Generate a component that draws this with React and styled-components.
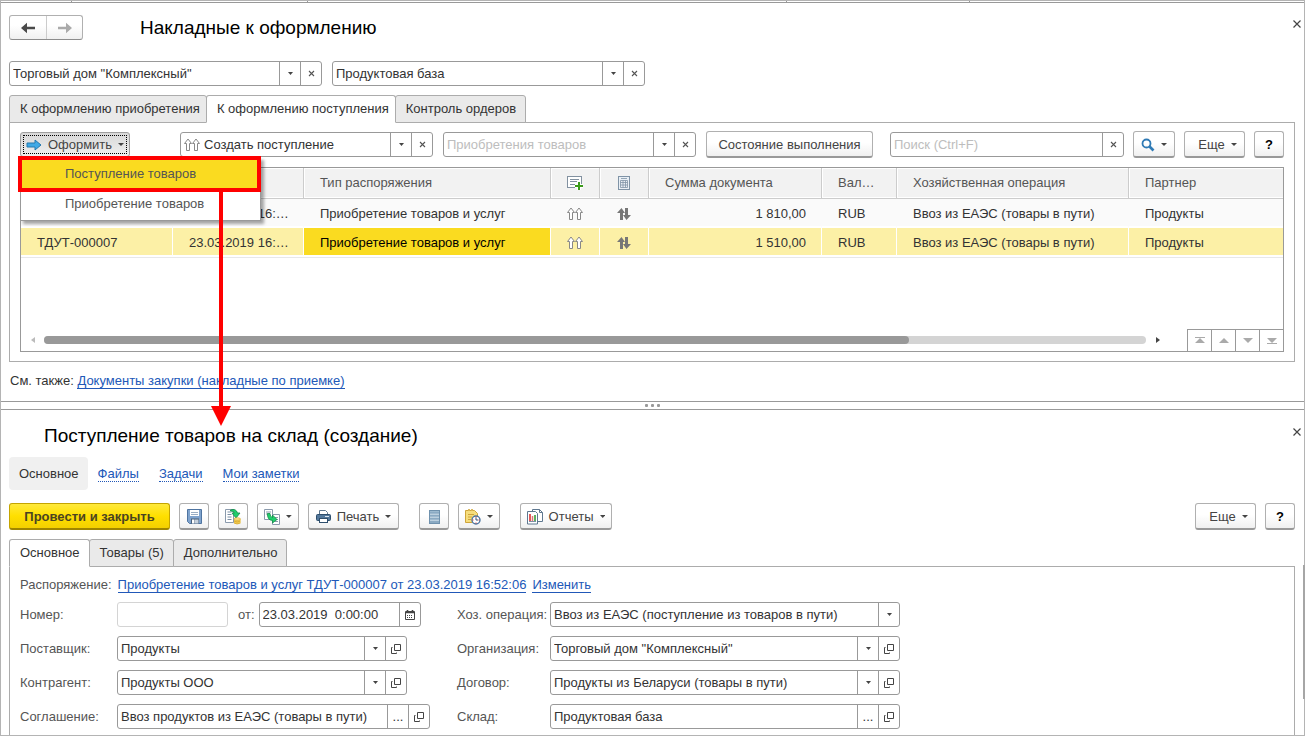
import React from 'react';
import styled, { createGlobalStyle, css } from 'styled-components';

const GlobalStyle = createGlobalStyle`
  *, *::before, *::after { box-sizing: border-box; }
  body { margin: 0; background: #fff; }
  body, button, input, select, table {
    font-family: "Liberation Sans", Arial, sans-serif;
    font-size: 13px;
    line-height: 16px;
    color: #333;
  }
  button, input, select { margin: 0; }
`;

const Frame = styled.div`
  position: relative;
  display: flex;
  flex-direction: column;
  min-height: 100vh;
  border: 1px solid #b4b4b4;
`;
const TopStrip = styled.div`
  display: flex;
  height: 2px;
  border-bottom: 1px solid #999;
`;
const StripSegment = styled.span`
  width: ${(p) => p.$w}px;
  border-right: 1px solid #999;
`;
const ListPane = styled.section`
  padding: 12px 9px 12px 8px;
`;
const FormPane = styled.section`
  display: flex;
  flex-direction: column;
  flex: 1;
  padding: 13px 9px 0 8px;
`;
const Header = styled.header`
  display: flex;
  align-items: center;
  height: 25px;
  gap: 57px;
`;
const Title = styled.h1`
  margin: 0;
  padding-left: ${(p) => p.$indent || 0}px;
  flex: 1;
  font-size: 19px;
  line-height: 24px;
  font-weight: 400;
  color: #000;
`;
const Close = styled.button`
  display: flex;
  width: 14px;
  height: 14px;
  padding: 2px;
  margin: 0 -9px 8px 0;
  border: 0;
  background: none;
`;
const NavGroup = styled.div`
  display: flex;
  height: 25px;
  border: 1px solid #b0b0b0;
  border-bottom-color: #8c8c8c;
  border-radius: 3px;
  background: linear-gradient(#fff 40%, #f0f0f0);
`;
const NavButton = styled.button`
  display: flex;
  align-items: center;
  justify-content: center;
  width: 36px;
  padding: 0;
  border: 0;
  background: none;
  & + & { border-left: 1px solid #ccc; }
`;
const Row = styled.div`
  display: flex;
  align-items: center;
  gap: ${(p) => p.$gap || 10}px;
  margin-top: ${(p) => p.$top || 0}px;
`;
const EndGroup = styled(Row)`
  margin-left: auto;
`;
const Spacer = styled.div`
  flex: 0 0 2px;
`;

const FieldBox = styled.div`
  display: flex;
  flex: none;
  width: ${(p) => p.$w}px;
  height: 25px;
  border: 1px solid ${(p) => (p.$faint ? '#d4d4d4' : '#999')};
  border-radius: 3px;
  background: #fff;
  overflow: hidden;
`;
const control = css`
  flex: 1;
  min-width: 0;
  height: 23px;
  padding: 0 3px;
  border: 0;
  outline: 0;
  background: none;
  appearance: none;
  text-overflow: ellipsis;
  color: ${(p) => (p.$muted ? '#bdbdbd' : '#333')};
`;
const Input = styled.input`
  ${control}
  &::placeholder { color: #bdbdbd; }
`;
const SelectGrid = styled.div`
  flex: 1;
  min-width: 0;
  display: grid;
  grid-template-columns: minmax(0, 1fr) 21px;
`;
const Select = styled.select`
  ${control}
  grid-area: 1 / 1 / 2 / 3;
  padding-right: 25px;
`;
const CaretCell = styled.span`
  grid-area: 1 / 2;
  display: flex;
  align-items: center;
  justify-content: center;
  border-left: 1px solid #999;
  pointer-events: none;
`;
const CellButton = styled.button`
  display: flex;
  align-items: center;
  justify-content: center;
  flex: 0 0 21px;
  padding: 0;
  border: 0;
  border-left: 1px solid #999;
  background: none;
`;
const FieldIcon = styled.span`
  display: flex;
  align-items: center;
  padding-left: 3px;
  margin-right: 1px;
`;

const TabBar = styled.div`
  display: flex;
  height: 28px;
  margin-top: 9px;
  margin-bottom: -1px;
`;
const Tab = styled.button`
  padding: 0 ${(p) => (p.$roomy ? 9 : 6)}px 0 10px;
  margin-left: -1px;
  border: 1px solid #acacac;
  border-bottom-color: ${(p) => (p.$active ? '#fff' : '#acacac')};
  border-radius: 3px 3px 0 0;
  background: ${(p) => (p.$active ? '#fff' : '#eaeaea')};
  position: relative;
  z-index: ${(p) => (p.$active ? 1 : 0)};
  &:first-child { margin-left: 0; }
`;
const TabPanel = styled.div`
  border: 1px solid #acacac;
  padding: 8px 10px 9px;
`;
const FormPanel = styled(TabPanel)`
  flex: 1;
  border-bottom: 0;
  padding: 10px 10px 6px;
`;

const Button = styled.button`
  display: flex;
  align-items: center;
  justify-content: center;
  flex: none;
  gap: 6px;
  height: 27px;
  width: ${(p) => (p.$w ? `${p.$w}px` : 'auto')};
  padding: 1px 6px 0;
  border: 1px solid #b0b0b0;
  border-bottom: 2px solid #999;
  border-radius: 3px;
  background: linear-gradient(#fff 45%, #f0f0f0);
  color: #444;
`;
const ButtonText = styled.span`
  margin-left: ${(p) => p.$l || 0}px;
`;
const PressedButton = styled(Button)`
  height: 25px;
  padding: 0 3px;
  border: 1px solid #a0a0a0;
  background: linear-gradient(#d8d8d8, #efefef);
  outline: 1px dotted #000;
  outline-offset: -4px;
`;
const PrimaryButton = styled(Button)`
  border-color: #c4a400;
  border-bottom-color: #a08600;
  background: linear-gradient(#ffe93b, #ffdf00 50%, #f3d000);
  font-weight: 700;
  color: #4a4322;
`;
const HelpButton = styled(Button)`
  color: #000;
  font-weight: 700;
`;

const MenuAnchor = styled.div`
  position: relative;
  margin-right: 40px;
`;
const Menu = styled.div`
  position: absolute;
  z-index: 3;
  top: 25px;
  left: 0;
  width: 241px;
  padding: 1px 0;
  border: 1px solid #999;
  background: #fff;
  box-shadow: 3px 3px 3px rgba(0, 0, 0, 0.35);
`;
const MenuItem = styled.button`
  display: block;
  width: 100%;
  height: 30px;
  padding: 0 0 0 44px;
  border: 0;
  text-align: left;
  color: #555;
  background: ${(p) => (p.$active ? '#fadb20' : '#fff')};
  ${(p) => p.$active && css`
    position: relative;
    width: calc(100% - 2px);
    outline: 4px solid #f00;
    outline-offset: -1px;
  `}
`;

const TableBox = styled.div`
  display: flex;
  flex-direction: column;
  height: 185px;
  margin-top: 9px;
  border: 1px solid #999;
`;
const Table = styled.table`
  width: 100%;
  table-layout: fixed;
  border-collapse: separate;
  border-spacing: 0;
`;
const Th = styled.th`
  height: 31px;
  padding: 0 16px;
  border-right: 1px solid #ccc;
  border-bottom: 1px solid #ccc;
  background: #f2f2f2;
  box-shadow: inset 1px 1px #fff, inset 0 -1px #fff;
  font-weight: 400;
  text-align: left;
  color: #555;
  white-space: nowrap;
  overflow: hidden;
  text-overflow: ellipsis;
  &:last-child { border-right: 0; }
`;
const Td = styled.td`
  height: 29px;
  padding: 2px ${(p) => (p.$align ? 15 : 12)}px 0 16px;
  border-right: 1px solid ${(p) => (p.$selected ? '#fff' : '#fafafa')};
  border-bottom: 2px solid #fff;
  box-shadow: 0 1px #e8e8e8;
  background: ${(p) => (p.$current ? '#fadb20' : p.$selected ? '#fcf0a6' : '#fafafa')};
  background-clip: padding-box;
  text-align: ${(p) => p.$align || 'left'};
  color: ${(p) => (p.$current ? '#000' : '#333')};
  white-space: nowrap;
  overflow: hidden;
  text-overflow: ellipsis;
  &:last-child { border-right: 0; }
`;
const IconWrap = styled.span`
  display: flex;
  justify-content: center;
  margin: 0 -12px 0 -16px;
`;
const HeadIconWrap = styled(IconWrap)`
  margin-right: -16px;
`;
const TableFooter = styled.div`
  display: flex;
  align-items: center;
  height: 22px;
  margin-top: auto;
  padding-left: 9px;
`;
const Track = styled.div`
  flex: 1;
  height: 8px;
  margin: 0 9px 0 8px;
  border-radius: 4px;
  background: #d4d4d4;
`;
const Thumb = styled.div`
  width: 78.5%;
  height: 8px;
  border-radius: 4px;
  background: #999;
`;
const Pager = styled.div`
  display: flex;
  height: 22px;
  margin-left: 26px;
  border-top: 1px solid #999;
`;
const PagerButton = styled.button`
  display: flex;
  align-items: center;
  justify-content: center;
  width: 24px;
  padding: 0;
  border: 0;
  border-left: 1px solid #999;
  background: none;
`;

const SeeAlso = styled.p`
  margin: 11px 0 0;
  padding-left: 1px;
`;
const Link = styled.a`
  color: #2158b8;
  text-decoration: none;
  border-bottom: 1px ${(p) => (p.$dotted ? 'dotted' : 'solid')} #2158b8;
  line-height: 15px;
`;
const Splitter = styled.div`
  display: flex;
  align-items: center;
  justify-content: center;
  gap: 3px;
  height: 9px;
  border: solid #999;
  border-width: 1px 0;
`;
const Dot = styled.i`
  width: 3px;
  height: 3px;
  border-radius: 1px;
  background: #999;
`;

const SectionNav = styled.nav`
  display: flex;
  align-items: baseline;
  gap: 20px;
  height: 33px;
  margin-top: 9px;
`;
const CurrentSection = styled.span`
  padding: 9px 9px 8px 10px;
  margin-right: -10px;
  border-radius: 4px;
  background: #f0f0f0;
`;
const FormGrid = styled.div`
  display: grid;
  grid-template-columns: 97px 340px 93px 350px;
  row-gap: 9px;
  align-items: center;
  margin-top: 9px;
`;
const Label = styled.label`
  color: #555;
  white-space: nowrap;
`;
const Basis = styled.div`
  display: flex;
  gap: 6px;
  height: 16px;
  color: #555;
`;
const Callout = styled.svg`
  position: absolute;
  z-index: 4;
  left: 209px;
  top: 187px;
  pointer-events: none;
`;
const PaneScroll = styled.div`
  position: absolute;
  right: -1px;
  bottom: 36px;
  width: 2px;
  height: 134px;
  background: #a6a6a6;
`;

const Caret = ({ w = 5 }) => (
  <svg width={w} height="3" viewBox="0 0 5 3" preserveAspectRatio="none"><path d="M0 0h5L2.5 3z" fill="#444" /></svg>
);
const Cross = () => (
  <svg width="7" height="7"><path d="M1 1l5 5M6 1l-5 5" stroke="#555" strokeWidth="1.1" /></svg>
);
const CloseIcon = () => (
  <svg width="10" height="10"><path d="M1.5 1.5l7 7M8.5 1.5l-7 7" stroke="#444" strokeWidth="1.2" /></svg>
);
const OpenIcon = () => (
  <svg width="10" height="10" fill="none" stroke="#444">
    <path d="M3.500.5h6v6h-6zM1.500 3.500h-1v6h5v-1" />
  </svg>
);
const ArrowIcon = ({ flip, color }) => (
  <svg width="16" height="12" viewBox="0 0 16 12">
    <path d="M1 6L7 .8V4.800H15V7.200H7V11.200z" fill={color} transform={flip ? 'rotate(180 8 6)' : undefined} />
  </svg>
);
const BlueArrow = () => (
  <svg width="16" height="12"><path d="M1 4h8V1l6 5-6 5V8H1z" fill="#3fa9e6" stroke="#2478ae" /></svg>
);
const TwinArrows = ({ color = '#888' }) => (
  <svg width="16" height="13" fill="#fff" stroke={color}>
    <path d="M2.500 12.500v-7h-2L4 1l3.500 4.500h-2v7zM10.500 12.500v-7h-2L12 1l3.500 4.500h-2v7z" />
  </svg>
);
const UpDown = () => (
  <svg width="14" height="12" fill="#777">
    <path d="M3 12V5H0L4.500 0 8 5H6v7zM8 0h3v7h3l-4.500 5L6 7h2z" />
  </svg>
);
const DocPlus = () => (
  <svg width="17" height="14" fill="none">
    <rect x=".5" y=".5" width="14" height="11" fill="#fff" stroke="#8291a0" />
    <path d="M3 3.500h9M3 5.500h7M3 8.500h5" stroke="#8291a0" />
    <path d="M12 6v8M8 10h8" stroke="#fff" strokeWidth="4" />
    <path d="M12 6v8M8 10h8" stroke="#3a9b1a" strokeWidth="2" />
  </svg>
);
const SheetIcon = () => (
  <svg width="12" height="14" fill="none" stroke="#7f93a6">
    <rect x=".5" y=".5" width="11" height="13" fill="#e9eff5" />
    <path d="M3 2.500h6M2.500 4.500h7v7h-7zM2.500 6.500h7M2.500 9h7M5 4.500v7M7.500 4.500v7" strokeWidth=".8" />
  </svg>
);
const SearchIcon = () => (
  <svg width="14" height="14" fill="none" stroke="#2f7ab5">
    <circle cx="5.500" cy="5.500" r="4" strokeWidth="1.800" />
    <path d="M8.500 8.500l4 4" strokeWidth="2.600" />
  </svg>
);
const SaveIcon = () => (
  <svg width="15" height="15">
    <path d="M.5.5h14v14H2.500l-2-2z" fill="#7fa3cd" stroke="#4f74a0" />
    <rect x="3" y="1" width="9" height="6" fill="#fff" />
    <path d="M4 3.500h7M4 5.500h7" stroke="#9aaec4" />
    <rect x="4" y="9.500" width="8" height="5" fill="#4a6079" />
    <rect x="5" y="10.500" width="2.500" height="4" fill="#fff" />
    <rect x="8" y="10.500" width="3.500" height="4" fill="#c5d0dc" />
  </svg>
);
const PostIcon = () => (
  <svg width="17" height="17" fill="none">
    <path d="M.5 1.500h8v13h-8z" fill="#fff" stroke="#8a9aac" />
    <path d="M2.500 4h4M2.500 6.500h4M2.500 9h4M2.500 11.500h4" stroke="#7b8ea4" />
    <path d="M5.500 2Q11 0 12.500 5H15L11 10 7 5h2.500Q9 3 5.500 3z" fill="#1fcf6b" stroke="#128a47" strokeWidth=".8" />
    <path d="M9 11v4q3 2 6.500 0v-4z" fill="#f3cc50" />
    <ellipse cx="12.200" cy="11" rx="3.300" ry="1.300" fill="#fbe48c" stroke="#d3a42c" strokeWidth=".6" />
    <path d="M9 13q3 2 6.500 0M9 15q3 2 6.500 0" stroke="#d3a42c" strokeWidth=".8" />
  </svg>
);
const CreateFromIcon = () => (
  <svg width="17" height="16" fill="none">
    <path d="M.5.5h8v10h-8zM8.500 5.500h7v10h-7z" fill="#fff" stroke="#8a9aac" />
    <path d="M2 3h5M2 5h2M11 8.500h3M11 10.500h3M11 12.500h3" stroke="#8a9aac" />
    <path d="M3.500 4.500h2.500Q6 8 8.500 8.500V6L13 10.500 8.500 14v-2.500Q3 11 3.500 4.500z" fill="#1fcf6b" stroke="#128a47" strokeWidth=".8" />
  </svg>
);
const PrinterIcon = () => (
  <svg width="15" height="15">
    <path d="M3.500 6V1.500h6l2 2V6" fill="#fff" stroke="#5f7890" />
    <rect x=".5" y="5.500" width="14" height="6" rx="1" fill="#52779b" stroke="#2e4e6c" />
    <path d="M9 7.500h4" stroke="#dce6ef" />
    <rect x="3.500" y="9.500" width="8" height="4" fill="#fff" stroke="#2e4e6c" />
  </svg>
);
const ListIcon = () => (
  <svg width="11" height="14">
    <rect x=".5" y=".5" width="10" height="13" fill="#9cb9cf" stroke="#6f91ad" />
    <path d="M1 4h9M1 7h9M1 10h9" stroke="#dbe7f0" />
    <path d="M1 3h9M1 6h9M1 9h9M1 12h9" stroke="#6f91ad" strokeWidth=".7" />
  </svg>
);
const TaskIcon = () => (
  <svg width="16" height="16" fill="none">
    <path d="M.5 1.500h3v-1h1v1h2v-1h1v1h2l3 3v9h-12z" fill="#f6dd7c" stroke="#cfa53a" />
    <path d="M3 5.500h6M3 8h4M3 10.500h3" stroke="#cfa53a" />
    <circle cx="11" cy="11" r="4" fill="#fff" stroke="#4a76a2" strokeWidth="1.400" />
    <path d="M11 11V8.500M11 11h2" stroke="#35577a" />
    <path d="M11 7.500v1M11 13.500v1M7.500 11h1M13.500 11h1" stroke="#d33" />
  </svg>
);
const ReportIcon = () => (
  <svg width="17" height="16" fill="none">
    <path d="M5.500.5h7l3 3v9h-10z" fill="#fff" stroke="#5f7890" />
    <path d="M12.500.5v3h3" stroke="#5f7890" />
    <path d="M.5 2.500h8l2 2v10.500H.5z" fill="#fff" stroke="#5f7890" />
    <path d="M3 5v7" stroke="#d22" strokeWidth="1.500" />
    <path d="M5.500 7v5" stroke="#d77" strokeWidth="1.500" />
    <path d="M8 6v6" stroke="#2a9a2a" strokeWidth="1.500" />
    <path d="M2 12.500h7" stroke="#7b8ea4" />
  </svg>
);
const CalendarIcon = () => (
  <svg width="10" height="10">
    <path d="M.5 1.500h9v8h-9z" fill="#fff" stroke="#444" />
    <path d="M1 2.500h8M2.500 0v3M7.500 0v3" stroke="#444" strokeWidth="1.600" />
    <path d="M2 5.500h6M2 7.500h6" stroke="#444" strokeDasharray="1 1" />
  </svg>
);

const SelectField = ({ w, value, muted, clear, open, icon, id, name }) => (
  <FieldBox $w={w}>
    {icon && <FieldIcon>{icon}</FieldIcon>}
    <SelectGrid>
      <Select id={id} aria-label={name} $muted={muted} defaultValue={value}>
        <option>{value}</option>
      </Select>
      <CaretCell><Caret /></CaretCell>
    </SelectGrid>
    {clear && <CellButton aria-label="Очистить"><Cross /></CellButton>}
    {open && <CellButton aria-label="Открыть"><OpenIcon /></CellButton>}
  </FieldBox>
);
const PickField = ({ w, value, id }) => (
  <FieldBox $w={w}>
    <Input id={id} defaultValue={value} />
    <CellButton aria-label="Выбрать">...</CellButton>
    <CellButton aria-label="Открыть"><OpenIcon /></CellButton>
  </FieldBox>
);

const stripSegments = [71, 236, 479, 183];
const columns = [152, 131, 247, 49, 49, 173, 75, 232];
const orders = [
  { number: 'ТДУТ-000006', date: '23.03.2019 16:52:06', sum: '1 810,00' },
  { number: 'ТДУТ-000007', date: '23.03.2019 16:52:06', sum: '1 510,00', selected: true },
];

const OrdersTable = () => (
  <Table>
    <colgroup>
      {columns.map((w, i) => <col key={i} width={w} />)}
      <col />
    </colgroup>
    <thead>
      <tr>
        <Th>Номер</Th>
        <Th>Дата</Th>
        <Th>Тип распоряжения</Th>
        <Th><HeadIconWrap><DocPlus /></HeadIconWrap></Th>
        <Th><HeadIconWrap><SheetIcon /></HeadIconWrap></Th>
        <Th>Сумма документа</Th>
        <Th>Валюта</Th>
        <Th>Хозяйственная операция</Th>
        <Th>Партнер</Th>
      </tr>
    </thead>
    <tbody>
      {orders.map((o) => (
        <tr key={o.number}>
          <Td $selected={o.selected}>{o.number}</Td>
          <Td $selected={o.selected}>{o.date}</Td>
          <Td $selected={o.selected} $current={o.selected}>Приобретение товаров и услуг</Td>
          <Td $selected={o.selected}><IconWrap><TwinArrows /></IconWrap></Td>
          <Td $selected={o.selected}><IconWrap><UpDown /></IconWrap></Td>
          <Td $selected={o.selected} $align="right">{o.sum}</Td>
          <Td $selected={o.selected}>RUB</Td>
          <Td $selected={o.selected}>Ввоз из ЕАЭС (товары в пути)</Td>
          <Td $selected={o.selected}>Продукты</Td>
        </tr>
      ))}
    </tbody>
  </Table>
);

const pagerShapes = [
  ['В начало', 'M0 0h10v1H0zM0 6h10L5 1z'],
  ['Вверх', 'M0 6h10L5 1z'],
  ['Вниз', 'M0 1h10L5 6z'],
  ['В конец', 'M0 1h10L5 6zM0 6h10v1H0z'],
];

export default function App() {
  return (
    <Frame>
      <GlobalStyle />
      <TopStrip>
        {stripSegments.map((w) => <StripSegment key={w} $w={w} />)}
      </TopStrip>
      <ListPane>
        <Header>
          <NavGroup>
            <NavButton aria-label="Назад"><ArrowIcon color="#4a4a4a" /></NavButton>
            <NavButton aria-label="Вперед"><ArrowIcon flip color="#aaa" /></NavButton>
          </NavGroup>
          <Title>Накладные к оформлению</Title>
          <Close aria-label="Закрыть"><CloseIcon /></Close>
        </Header>
        <Row $top={21}>
          <SelectField w={313} name="Организация" value={'Торговый дом "Комплексный"'} clear />
          <SelectField w={313} name="Склад" value="Продуктовая база" clear />
        </Row>
        <TabBar>
          <Tab>К оформлению приобретения</Tab>
          <Tab $active>К оформлению поступления</Tab>
          <Tab $roomy>Контроль ордеров</Tab>
        </TabBar>
        <TabPanel>
          <Row>
            <MenuAnchor>
              <PressedButton $w={110}><BlueArrow />Оформить<Caret w={6} /></PressedButton>
              <Menu>
                <MenuItem $active>Поступление товаров</MenuItem>
                <MenuItem>Приобретение товаров</MenuItem>
              </Menu>
            </MenuAnchor>
            <SelectField w={253} name="Действие" value="Создать поступление" icon={<TwinArrows />} clear />
            <SelectField w={253} name="Тип распоряжения" value="Приобретения товаров" muted clear />
            <Button $w={167}>Состояние выполнения</Button>
            <EndGroup $gap={9}>
              <FieldBox $w={234}>
                <Input aria-label="Поиск" placeholder="Поиск (Ctrl+F)" />
                <CellButton aria-label="Очистить"><Cross /></CellButton>
              </FieldBox>
              <Button $w={42} aria-label="Найти"><SearchIcon /><Caret w={6} /></Button>
              <Button $w={61}><ButtonText $l={6}>Еще</ButtonText><Caret w={6} /></Button>
              <HelpButton $w={30}>?</HelpButton>
            </EndGroup>
          </Row>
          <TableBox>
            <OrdersTable />
            <TableFooter>
              <svg width="6" height="6"><path d="M5 0v6L1 3z" fill="#bbb" /></svg>
              <Track><Thumb /></Track>
              <svg width="6" height="6"><path d="M1 0v6l4-3z" fill="#444" /></svg>
              <Pager>
                {pagerShapes.map(([label, d]) => (
                  <PagerButton key={label} aria-label={label}>
                    <svg width="10" height="7"><path d={d} fill="#aaa" /></svg>
                  </PagerButton>
                ))}
              </Pager>
            </TableFooter>
          </TableBox>
        </TabPanel>
        <SeeAlso>См. также: <Link href="#docs">Документы закупки (накладные по приемке)</Link></SeeAlso>
      </ListPane>
      <Splitter><Dot /><Dot /><Dot /></Splitter>
      <FormPane>
        <Header>
          <Title $indent={35}>Поступление товаров на склад (создание)</Title>
          <Close aria-label="Закрыть"><CloseIcon /></Close>
        </Header>
        <SectionNav>
          <CurrentSection>Основное</CurrentSection>
          <Link $dotted href="#files">Файлы</Link>
          <Link $dotted href="#tasks">Задачи</Link>
          <Link $dotted href="#notes">Мои заметки</Link>
        </SectionNav>
        <Row $top={13} $gap={9}>
          <PrimaryButton $w={161}>Провести и закрыть</PrimaryButton>
          <Button $w={30} aria-label="Записать"><SaveIcon /></Button>
          <Button $w={30} aria-label="Провести"><PostIcon /></Button>
          <Button $w={42} aria-label="Создать на основании"><CreateFromIcon /><Caret w={6} /></Button>
          <Button $w={91}><PrinterIcon />Печать<Caret w={6} /></Button>
          <Spacer />
          <Button $w={30} aria-label="Реестр"><ListIcon /></Button>
          <Button $w={42} aria-label="Задача"><TaskIcon /><Caret w={6} /></Button>
          <Spacer />
          <Button $w={92}><ReportIcon />Отчеты<Caret w={6} /></Button>
          <EndGroup $gap={9}>
            <Button $w={61}><ButtonText $l={6}>Еще</ButtonText><Caret w={6} /></Button>
            <HelpButton $w={30}>?</HelpButton>
          </EndGroup>
        </Row>
        <TabBar>
          <Tab $active $roomy>Основное</Tab>
          <Tab $roomy>Товары (5)</Tab>
          <Tab $roomy>Дополнительно</Tab>
        </TabBar>
        <FormPanel>
          <Basis>
            <span>Распоряжение:</span>
            <Link href="#order">Приобретение товаров и услуг ТДУТ-000007 от 23.03.2019 16:52:06</Link>
            <Link href="#edit">Изменить</Link>
          </Basis>
          <FormGrid>
            <Label htmlFor="number">Номер:</Label>
            <Row>
              <FieldBox $w={111} $faint><Input id="number" /></FieldBox>
              <Row $gap={4}>
                <Label htmlFor="date">от:</Label>
                <FieldBox $w={162}>
                  <Input id="date" defaultValue="23.03.2019  0:00:00" />
                  <CellButton aria-label="Календарь"><CalendarIcon /></CellButton>
                </FieldBox>
              </Row>
            </Row>
            <Label htmlFor="operation">Хоз. операция:</Label>
            <SelectField id="operation" w={350} value="Ввоз из ЕАЭС (поступление из товаров в пути)" />
            <Label htmlFor="supplier">Поставщик:</Label>
            <SelectField id="supplier" w={290} value="Продукты" open />
            <Label htmlFor="company">Организация:</Label>
            <SelectField id="company" w={350} value={'Торговый дом "Комплексный"'} open />
            <Label htmlFor="partner">Контрагент:</Label>
            <SelectField id="partner" w={290} value="Продукты ООО" open />
            <Label htmlFor="contract">Договор:</Label>
            <SelectField id="contract" w={350} value="Продукты из Беларуси (товары в пути)" open />
            <Label htmlFor="agreement">Соглашение:</Label>
            <PickField id="agreement" w={313} value="Ввоз продуктов из ЕАЭС (товары в пути)" />
            <Label htmlFor="warehouse">Склад:</Label>
            <PickField id="warehouse" w={350} value="Продуктовая база" />
          </FormGrid>
        </FormPanel>
      </FormPane>
      <PaneScroll />
      <Callout width="22" height="240">
        <path d="M9 0h4v218h8L11 238 1 218h8z" fill="#f00" />
      </Callout>
    </Frame>
  );
}
